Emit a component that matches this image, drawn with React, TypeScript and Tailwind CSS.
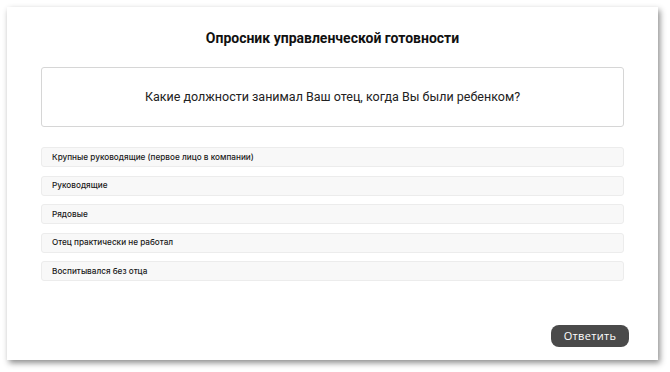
export default function App() {
  const options = [
    'Крупные руководящие (первое лицо в компании)',
    'Руководящие',
    'Рядовые',
    'Отец практически не работал',
    'Воспитывался без отца',
  ];

  return (
    <div className="h-[372px] w-[670px] bg-white pl-[7px] pt-[7px]">
      <div className="flex h-[353px] w-[651px] flex-col bg-white px-[34px] shadow-[2px_3px_6px_rgba(0,0,0,0.45)]">
        <h1 className="mt-[21px] text-center font-['Roboto',sans-serif] text-[14px] font-bold leading-[20px] text-[#111]">
          Опросник управленческой готовности
        </h1>
        <div className="mt-[19px] flex h-[60px] items-center justify-center rounded-[3px] border border-[#d6d6d6] font-['Roboto',sans-serif] text-[12.5px] text-[#222]">
          Какие должности занимал Ваш отец, когда Вы были ребенком?
        </div>
        <div className="mt-[20px] flex flex-col gap-[8.5px]">
          {options.map((o) => (
            <div
              key={o}
              className="flex h-[20px] items-center rounded-[3px] border border-[#ececec] bg-[#f8f8f8] pl-[10px] font-['Inter',sans-serif] text-[8.2px] font-medium text-[#1a1a1a]"
            >
              {o}
            </div>
          ))}
        </div>
        <div className="mt-auto mb-[13px] flex justify-end">
          <button className="mr-[-5px] h-[22px] w-[78px] rounded-[8px] bg-[#4a4a4a] font-['Open_Sans',sans-serif] text-[11px] tracking-[0.3px] text-white">
            Ответить
          </button>
        </div>
      </div>
    </div>
  );
}
